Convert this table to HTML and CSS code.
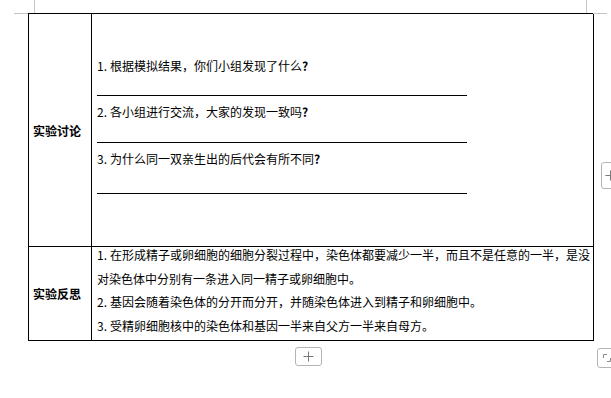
FILE: index.html
```html
<!DOCTYPE html>
<html lang="zh">
<head>
<meta charset="utf-8">
<link rel="stylesheet" href="styles.css">
</head>
<body>
<div class="page">
  <span class="mark mark-lv"></span>
  <span class="mark mark-lh"></span>
  <span class="mark mark-rv"></span>
  <span class="mark mark-rh"></span>

  <div class="doc">
    <table class="grid">
      <colgroup><col class="c1"><col class="c2"></colgroup>
      <tr class="r1">
        <td class="label">实验讨论</td>
        <td class="body1">
          <p class="q q1"><span class="num">1.</span>根据模拟结果，你们小组发现了什么<b>?</b></p>
          <div class="rule rule1"></div>
          <p class="q q2"><span class="num">2.</span>各小组进行交流，大家的发现一致吗<b>?</b></p>
          <div class="rule rule2"></div>
          <p class="q q3"><span class="num">3.</span>为什么同一双亲生出的后代会有所不同<b>?</b></p>
          <div class="rule rule3"></div>
        </td>
      </tr>
      <tr class="r2">
        <td class="label">实验反思</td>
        <td class="body2">
          <div class="refl">
            <p class="rp just"><span class="num">1.</span>在形成精子或卵细胞的细胞分裂过程中，染色体都要减少一半，而且不是任意的一半，是没</p>
            <p class="rp">对染色体中分别有一条进入同一精子或卵细胞中。</p>
            <p class="rp"><span class="num">2.</span>基因会随着染色体的分开而分开，并随染色体进入到精子和卵细胞中。</p>
            <p class="rp"><span class="num">3.</span>受精卵细胞核中的染色体和基因一半来自父方一半来自母方。</p>
          </div>
        </td>
      </tr>
    </table>
    <div class="below">
      <span class="addbtn">
        <svg width="11" height="11" viewBox="0 0 11 11"><path d="M5.5 0.5V10.5M0.5 5.5H10.5" stroke="#777" stroke-width="1"/></svg>
      </span>
    </div>
  </div>

  <span class="sidebtn">
    <svg width="11" height="11" viewBox="0 0 11 11"><path d="M5.5 0.5V10.5M0.5 5.5H10.5" stroke="#777" stroke-width="1"/></svg>
  </span>
  <span class="cornerbtn">
    <svg width="8" height="8" viewBox="0 0 8 8"><path d="M0.5 4V0.5H4M7.5 4V7.5H4" stroke="#888" stroke-width="1" fill="none"/></svg>
  </span>
</div>
</body>
</html>
```
FILE: styles.css
```css
html, body {
  margin: 0;
  padding: 0;
  background: #fff;
}
body {
  width: 611px;
  height: 398px;
  overflow: hidden;
  font-family: "Noto Sans CJK SC", "Noto Sans", sans-serif;
  font-size: 12px;
  color: #000;
}
.page {
  position: relative;
  width: 611px;
  height: 398px;
}
.mark {
  position: absolute;
  background: #c4c4c4;
}
.mark-lv { left: 34px; top: 0; width: 1px; height: 13px; }
.mark-lh { left: 14px; top: 13px; width: 14px; height: 1px; }
.mark-rv { left: 586px; top: 0; width: 1px; height: 13px; }
.mark-rh { left: 593px; top: 13px; width: 14px; height: 1px; }

.doc {
  padding: 13px 0 0 28px;
}
.grid {
  border-collapse: collapse;
  table-layout: fixed;
  width: 565px;
}
.grid td {
  border: 1px solid #000;
  padding: 0;
  box-sizing: border-box;
}
.c1 { width: 63px; }
.c2 { width: 502px; }
.r1 { height: 233px; }
.r2 { height: 94px; }
.label {
  font-weight: 700;
  vertical-align: middle;
  padding-left: 4px !important;
  white-space: nowrap;
  text-align: left;
}
.body1 {
  vertical-align: top;
  padding: 42px 0 0 5px !important;
}
.q {
  margin: 0;
  line-height: 20px;
  height: 20px;
  white-space: nowrap;
}
.q b { font-weight: 700; }
.num {
  display: inline-block;
  width: 13px;
}
.rule {
  width: 370px;
  height: 0;
  border-top: 1px solid #000;
}
.rule1 { margin: 19px 0 6px; }
.rule2 { margin: 20px 0 6px; }
.rule3 { margin: 24px 0 0; }

.body2 {
  vertical-align: top;
  padding: 0 7px 0 5px !important;
}
.refl {
  margin-top: -4px;
}
.rp {
  margin: 0;
  line-height: 23.5px;
  white-space: nowrap;
}
.just {
  text-align: justify;
  text-align-last: justify;
}

.below {
  width: 565px;
  display: flex;
  justify-content: center;
  padding-right: 4px;
  box-sizing: border-box;
  margin-top: 6px;
}
.addbtn, .sidebtn, .cornerbtn {
  display: flex;
  align-items: center;
  justify-content: center;
  box-sizing: border-box;
  border: 1px solid #b4b4b4;
  border-radius: 3px;
  background: #fff;
}
.addbtn {
  width: 27px;
  height: 19px;
}
.sidebtn {
  position: absolute;
  left: 601px;
  top: 162px;
  width: 24px;
  height: 27px;
  justify-content: flex-start;
  padding-left: 3px;
}
.cornerbtn {
  position: absolute;
  left: 597px;
  top: 348px;
  width: 18px;
  height: 20px;
  justify-content: flex-start;
  padding-left: 5px;
}
```
